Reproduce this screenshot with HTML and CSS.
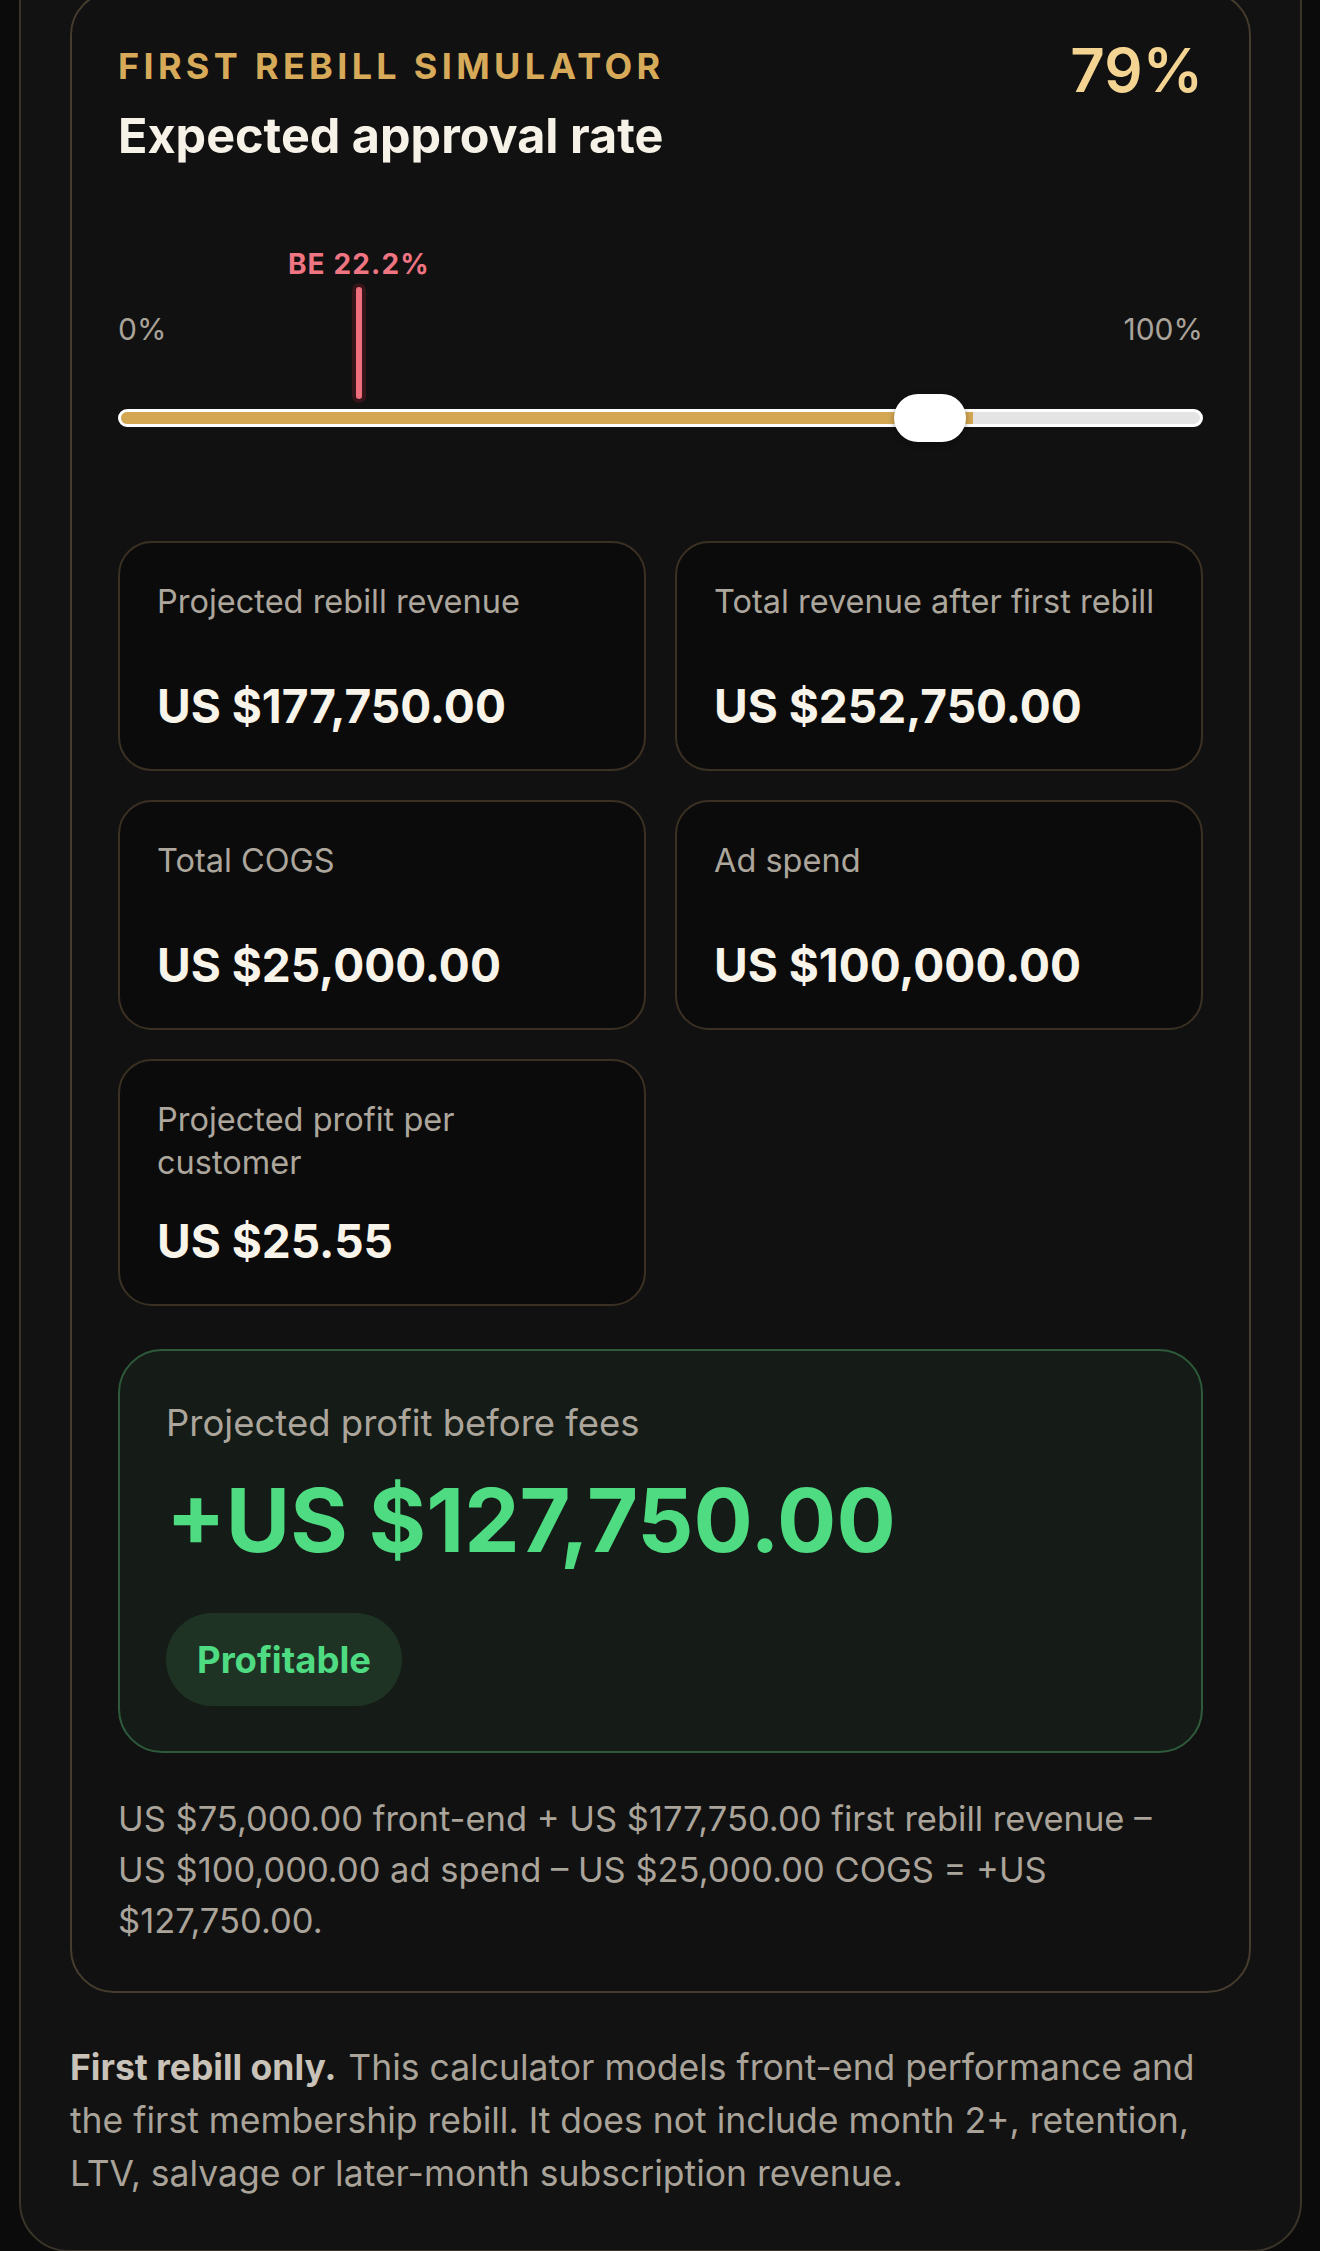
FILE: index.html
```html
<!DOCTYPE html>
<html lang="en">
  <head>
    <meta charset="UTF-8" />
    <meta name="viewport" content="width=device-width, initial-scale=1.0" />
    <title>First Rebill Simulator</title>
    <link rel="stylesheet" href="styles.css">
  </head>
  <body>
    <div class="shell">
      <section class="sim-card">
        <div class="sim-head">
          <div>
            <div class="eyebrow">First rebill simulator</div>
            <h2 class="sim-title">Expected approval rate</h2>
          </div>
          <div class="rate-value">79%</div>
        </div>

        <!-- approval slider with break-even marker -->
        <div class="slider">
          <div class="be-label" style="left: 22.2%;">BE 22.2%</div>
          <div class="be-marker" style="left: 22.2%;"></div>
          <div class="scale">
            <span>0%</span>
            <span>100%</span>
          </div>
          <div class="track">
            <div class="track-fill" style="width: 79%;"></div>
            <div class="thumb" style="left: 75%;"></div>
          </div>
        </div>

        <div class="metrics">
          <div class="metric">
            <div class="metric-label">Projected rebill revenue</div>
            <div class="metric-value">US $177,750.00</div>
          </div>
          <div class="metric">
            <div class="metric-label">Total revenue after first rebill</div>
            <div class="metric-value">US $252,750.00</div>
          </div>
          <div class="metric">
            <div class="metric-label">Total COGS</div>
            <div class="metric-value">US $25,000.00</div>
          </div>
          <div class="metric">
            <div class="metric-label">Ad spend</div>
            <div class="metric-value">US $100,000.00</div>
          </div>
          <div class="metric">
            <div class="metric-label">Projected profit per customer</div>
            <div class="metric-value">US $25.55</div>
          </div>
        </div>

        <div class="profit">
          <div class="profit-label">Projected profit before fees</div>
          <div class="profit-value">+US $127,750.00</div>
          <span class="pill">Profitable</span>
        </div>

        <p class="formula">US $75,000.00 front-end + US $177,750.00 first rebill revenue – US $100,000.00 ad spend – US $25,000.00 COGS = +US $127,750.00.</p>
      </section>

      <p class="note"><strong>First rebill only.</strong> This calculator models front-end performance and the first membership rebill. It does not include month 2+, retention, LTV, salvage or later-month subscription revenue.</p>
    </div>
  </body>
</html>
```
FILE: styles.css
```css
* {
  box-sizing: border-box;
}
body {
  margin: 0;
  background: #0b0b0b;
  font-family: Inter, "Noto Sans", sans-serif;
  color: #f6f1e7;
  overflow: hidden;
}
.shell {
  margin: -60px 18px 0 19px;
  padding: 49px 49px 50px;
  background: #121212;
  border: 2px solid #3a342a;
  border-radius: 50px;
}
.sim-card {
  padding: 51px 46px 45px;
  background: #111111;
  border: 2px solid #463c2d;
  border-radius: 44px;
}
.sim-head {
  display: flex;
  justify-content: space-between;
  align-items: flex-start;
}
.eyebrow {
  font-size: 36px;
  line-height: 44px;
  font-weight: 700;
  letter-spacing: 0.12em;
  text-transform: uppercase;
  color: #d7aa59;
}
.sim-title {
  margin: 19px 0 0;
  font-size: 48.5px;
  line-height: 58px;
  font-weight: 700;
  color: #f7f2e8;
}
.rate-value {
  margin-top: -4px;
  font-size: 60px;
  line-height: 60px;
  font-weight: 600;
  color: #f3d493;
}

/* slider */
.slider {
  position: relative;
  margin-top: 146px;
}
.be-label {
  position: absolute;
  top: -61px;
  transform: translateX(-50%);
  font-size: 28px;
  line-height: 28px;
  font-weight: 700;
  letter-spacing: 0.04em;
  color: #f07583;
  white-space: nowrap;
}
.be-marker {
  position: absolute;
  top: -24px;
  width: 6px;
  height: 112px;
  margin-left: -3px;
  background: #ef6f7d;
  border-radius: 3px;
  box-shadow: 0 0 0 4px rgba(120, 30, 40, 0.35);
}
.scale {
  display: flex;
  justify-content: space-between;
  font-size: 30px;
  line-height: 36px;
  color: #a9a39a;
}
.track {
  position: relative;
  height: 18px;
  margin-top: 62px;
  background: #e4e4e4;
  border: 3px solid #ffffff;
  border-radius: 9px;
}
.track-fill {
  height: 100%;
  background: #d4a853;
  border-radius: 6px 0 0 6px;
}
.thumb {
  position: absolute;
  top: -18px;
  width: 72px;
  height: 48px;
  margin-left: -36px;
  background: #ffffff;
  border-radius: 24px;
  box-shadow: 0 2px 6px rgba(0, 0, 0, 0.35);
}

/* metric cards */
.metrics {
  display: grid;
  grid-template-columns: 1fr 1fr;
  gap: 29px;
  margin-top: 114px;
}
.metric {
  display: flex;
  flex-direction: column;
  gap: 29px;
  min-height: 230px;
  padding: 37px 40px 35px 37px;
  background: #0b0b0b;
  border: 2px solid #3b3123;
  border-radius: 34px;
}
.metric-label {
  font-size: 32.5px;
  line-height: 43px;
  color: #aca69d;
}
.metric-value {
  margin-top: auto;
  font-size: 46px;
  line-height: 56px;
  font-weight: 700;
  color: #f8f4ea;
}

/* profit summary */
.profit {
  margin-top: 43px;
  padding: 50px 46px 45px;
  background: #151b16;
  border: 2px solid #2e5a3b;
  border-radius: 44px;
}
.profit-label {
  font-size: 36.5px;
  line-height: 44px;
  color: #aba59b;
}
.profit-value {
  margin-top: 25px;
  font-size: 88px;
  line-height: 100px;
  font-weight: 700;
  color: #4edb82;
}
.pill {
  display: inline-block;
  margin-top: 43px;
  padding: 24.5px 31px;
  font-size: 36.5px;
  line-height: 44px;
  font-weight: 700;
  color: #4edb82;
  background: #1f3325;
  border-radius: 47px;
}
.formula {
  margin: 40px 0 0;
  font-size: 34.5px;
  line-height: 51px;
  color: #aaa49b;
}
.note {
  margin: 48px 6px 0 0;
  font-size: 35.5px;
  line-height: 53px;
  color: #a9a399;
}
.note strong {
  margin-right: 2px;
  font-weight: 700;
  color: #c8c2b8;
}
```
